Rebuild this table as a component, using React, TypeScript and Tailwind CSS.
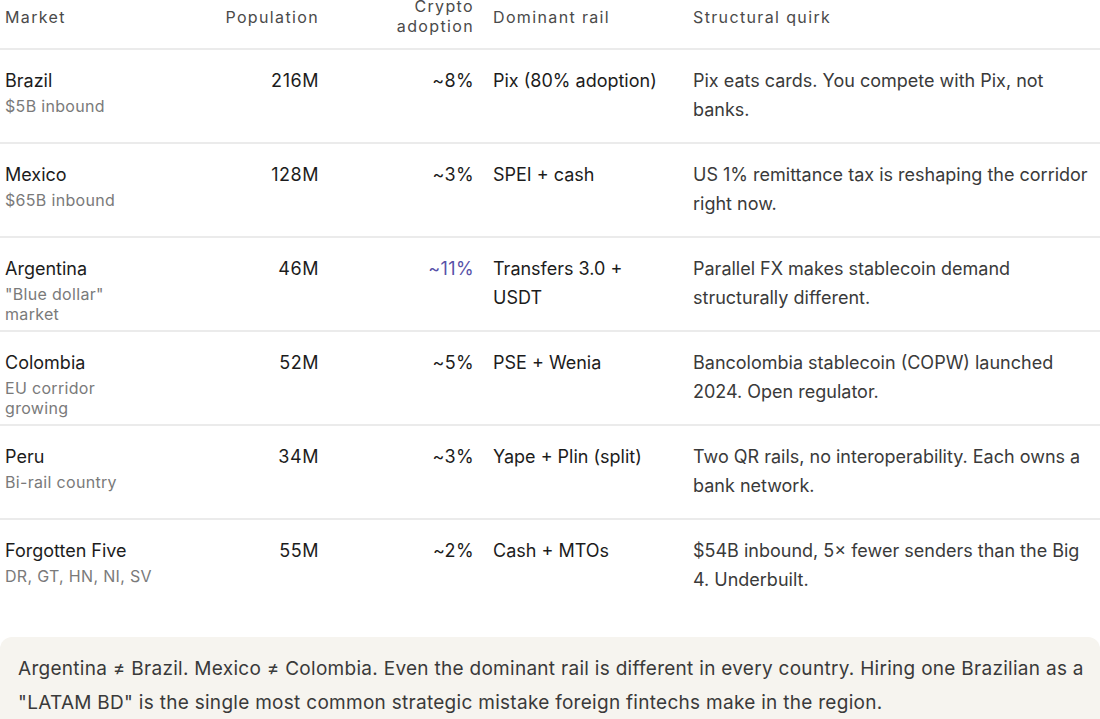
import React from 'react'

interface Row {
  market: string
  sub: string[]
  population: string
  crypto: string
  highlight?: boolean
  rail: string[]
  quirk: string[]
}

const rows: Row[] = [
  {
    market: 'Brazil',
    sub: ['$5B inbound'],
    population: '216M',
    crypto: '~8%',
    rail: ['Pix (80% adoption)'],
    quirk: ['Pix eats cards. You compete with Pix, not', 'banks.'],
  },
  {
    market: 'Mexico',
    sub: ['$65B inbound'],
    population: '128M',
    crypto: '~3%',
    rail: ['SPEI + cash'],
    quirk: ['US 1% remittance tax is reshaping the corridor', 'right now.'],
  },
  {
    market: 'Argentina',
    sub: ['"Blue dollar"', 'market'],
    population: '46M',
    crypto: '~11%',
    highlight: true,
    rail: ['Transfers 3.0 +', 'USDT'],
    quirk: ['Parallel FX makes stablecoin demand', 'structurally different.'],
  },
  {
    market: 'Colombia',
    sub: ['EU corridor', 'growing'],
    population: '52M',
    crypto: '~5%',
    rail: ['PSE + Wenia'],
    quirk: ['Bancolombia stablecoin (COPW) launched', '2024. Open regulator.'],
  },
  {
    market: 'Peru',
    sub: ['Bi-rail country'],
    population: '34M',
    crypto: '~3%',
    rail: ['Yape + Plin (split)'],
    quirk: ['Two QR rails, no interoperability. Each owns a', 'bank network.'],
  },
  {
    market: 'Forgotten Five',
    sub: ['DR, GT, HN, NI, SV'],
    population: '55M',
    crypto: '~2%',
    rail: ['Cash + MTOs'],
    quirk: ['$54B inbound, 5× fewer senders than the Big', '4. Underbuilt.'],
  },
]

const cols = 'grid grid-cols-[225px_104px_155px_199px_1fr]'

export default function App() {
  return (
    <div className="h-[719px] w-[1100px] overflow-hidden bg-white font-['Inter','Noto_Sans',sans-serif] text-[#1c1c1c]">
      {/* Header */}
      <div className={`${cols} h-[50px] items-start border-b-2 border-[#ebebeb] text-[16px] leading-[20px] tracking-[0.085em] text-[#4a4a4a]`}>
        <div className="mt-[7px] pl-[5px]">Market</div>
        <div className="mt-[7px] pr-[10px] text-right">Population</div>
        <div className="-mt-[4px] pr-[10px] text-right">
          <div>Crypto</div>
          <div>adoption</div>
        </div>
        <div className="mt-[7px] pl-[9px]">Dominant rail</div>
        <div className="mt-[7px] pl-[10px]">Structural quirk</div>
      </div>

      {/* Body */}
      {rows.map((r, i) => (
        <div
          key={r.market}
          className={`${cols} h-[94px] pt-[16px] text-[18px] leading-[29px] ${
            i < rows.length - 1 ? 'border-b-2 border-[#ebebeb]' : ''
          }`}
        >
          <div className="pl-[5px]">
            <div className="whitespace-nowrap">{r.market}</div>
            <div className="mt-[1px] text-[16px] leading-[20px] tracking-[0.02em] text-[#7a7a7a]">
              {r.sub.map(s => (
                <div key={s} className="whitespace-nowrap">{s}</div>
              ))}
            </div>
          </div>
          <div className="pr-[10px] text-right tracking-[0.03em]">{r.population}</div>
          <div className={`pr-[10px] text-right tracking-[0.02em] ${r.highlight ? 'text-[#5852a8]' : ''}`}>{r.crypto}</div>
          <div className="pl-[9px]">
            {r.rail.map(s => (
              <div key={s} className="whitespace-nowrap">{s}</div>
            ))}
          </div>
          <div className="pl-[10px] text-[#3a3a3a]">
            {r.quirk.map(s => (
              <div key={s} className="whitespace-nowrap">{s}</div>
            ))}
          </div>
        </div>
      ))}

      {/* Note */}
      <div className="mt-[23px] rounded-t-[12px] bg-[#f6f4ef] px-[18px] pt-[15px] pb-[20px] text-[19px] leading-[34px] tracking-[0.015em] text-[#3a3a3a]">
        <p className="whitespace-nowrap">
          Argentina ≠ Brazil. Mexico ≠ Colombia. Even the dominant rail is different in every country. Hiring one
          Brazilian as a
        </p>
        <p className="whitespace-nowrap">"LATAM BD" is the single most common strategic mistake foreign fintechs make in the region.</p>
      </div>
    </div>
  )
}
